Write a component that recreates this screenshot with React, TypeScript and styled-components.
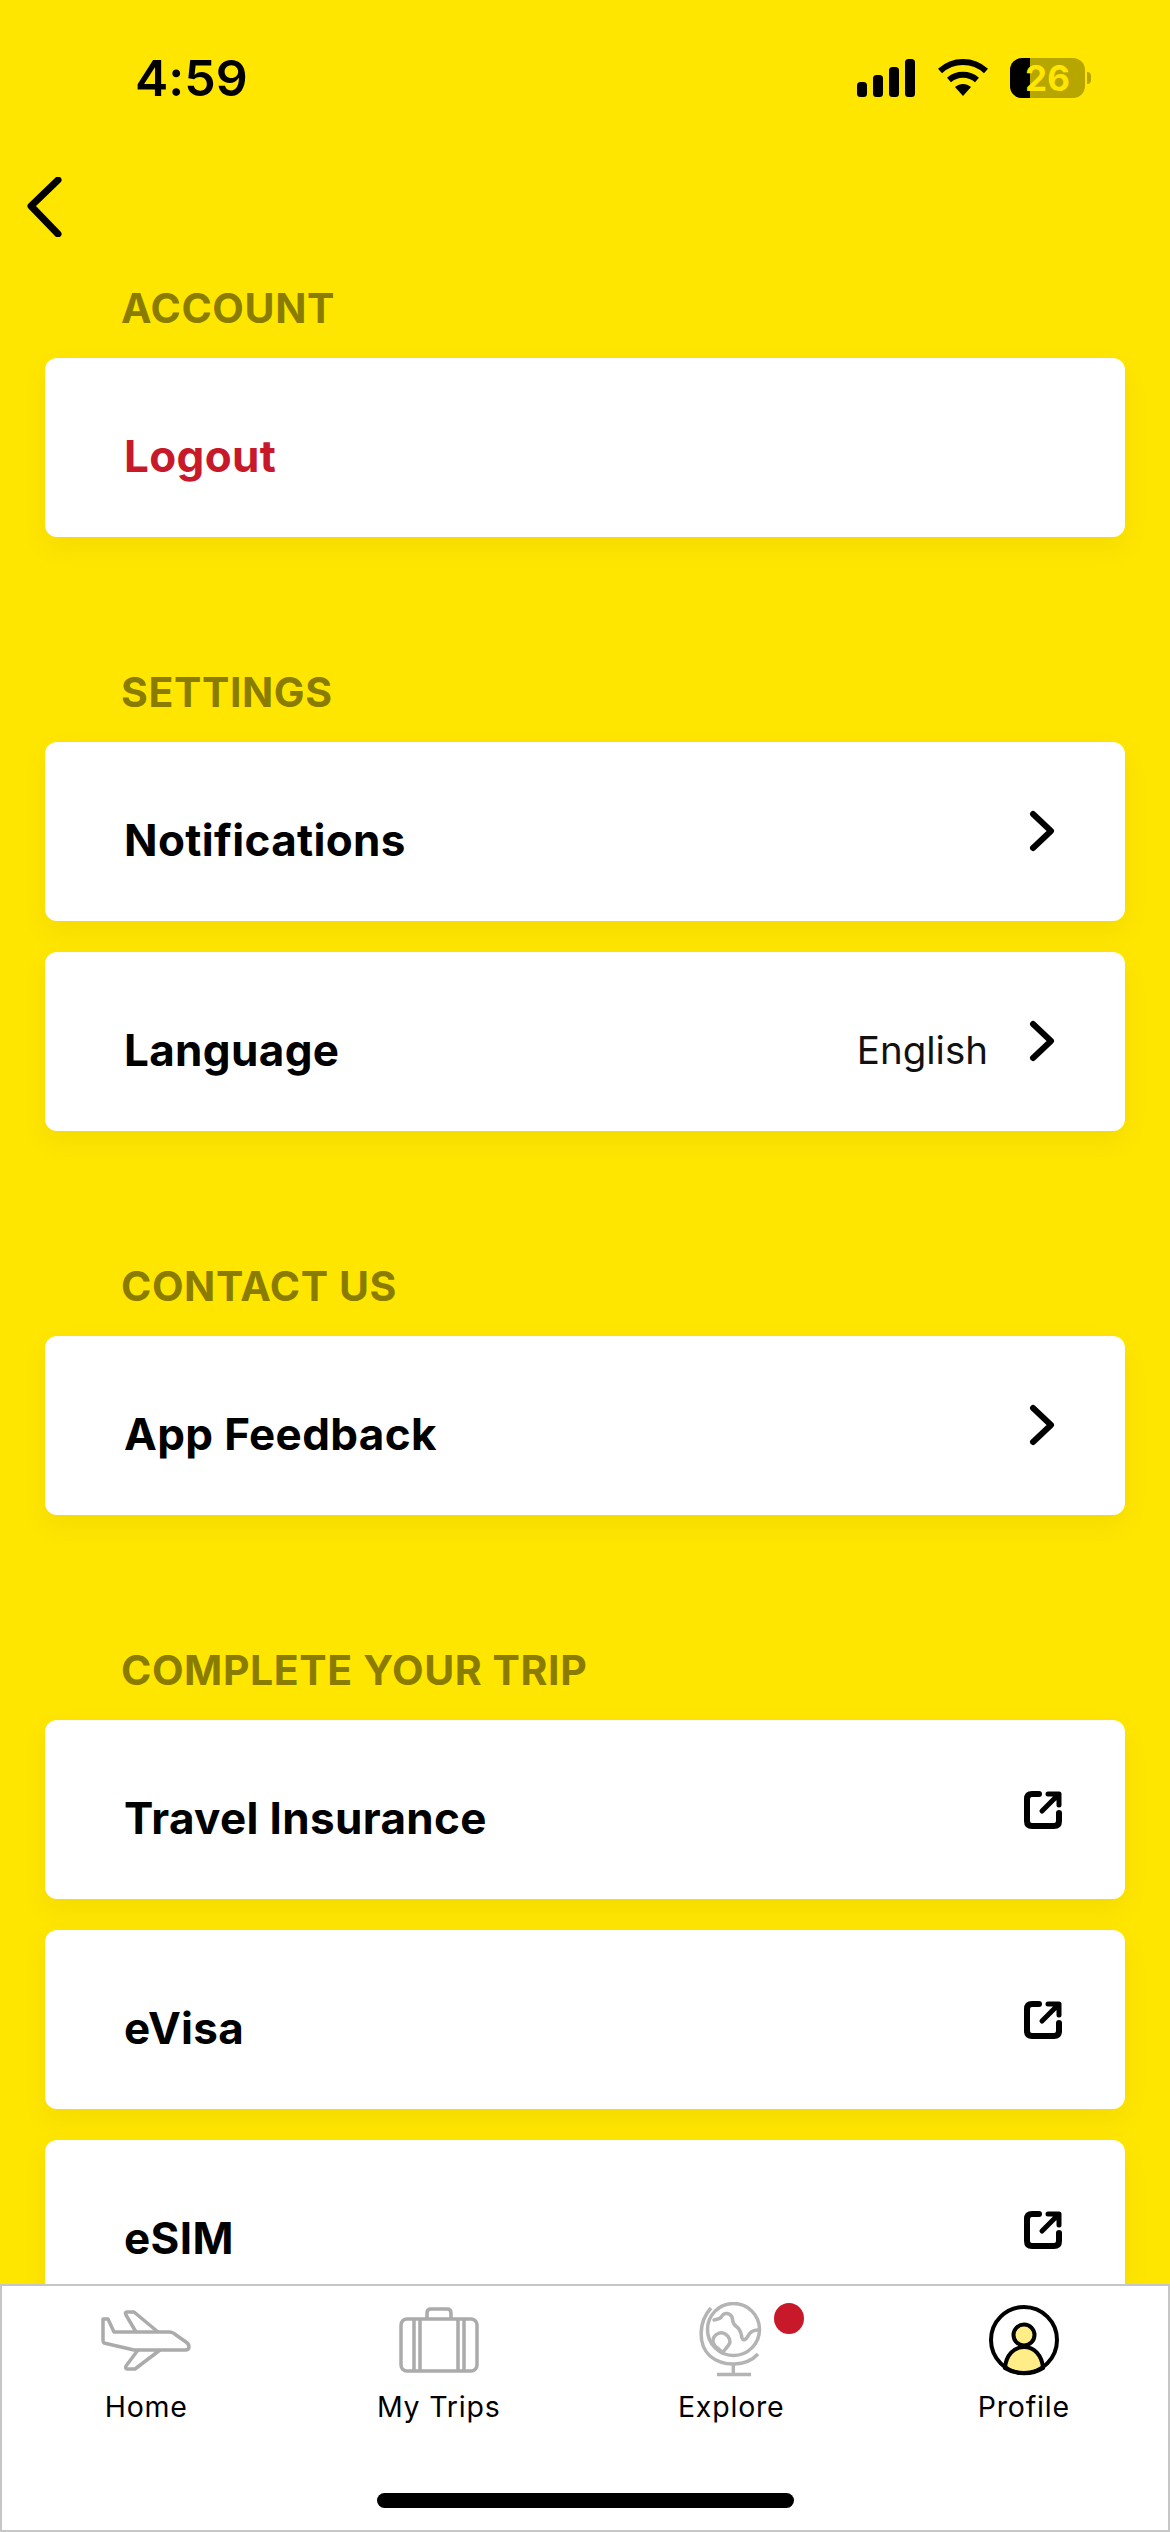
import React from "react";
import styled, { createGlobalStyle } from "styled-components";

const Global = createGlobalStyle`
  html, body { margin: 0; padding: 0; background: #FFE600; }
  body { font-family: Inter, "Liberation Sans", sans-serif; font-variant-ligatures: none; }
`;

const Screen = styled.div`
  position: relative;
  width: 1170px;
  height: 2532px;
  overflow: hidden;
  background: #ffe600;
`;

const StatusBar = styled.div`
  height: 156px;
  padding: 0 79px 0 135px;
  box-sizing: border-box;
  display: flex;
  align-items: center;
  justify-content: space-between;
`;

const Time = styled.span`
  font-size: 50px;
  font-weight: 600;
  color: #000;
`;

const StatusIcons = styled.div`
  display: flex;
  align-items: center;
  gap: 23px;
`;

const Battery = styled.div`
  position: relative;
  width: 75px;
  height: 40px;
  border-radius: 12px;
  overflow: hidden;
  background: #b8a600;
`;

const BatteryFill = styled.div`
  height: 100%;
  background: #000;
`;

const BatteryText = styled.span`
  position: absolute;
  inset: 0;
  display: flex;
  align-items: center;
  justify-content: center;
  font-size: 35px;
  font-weight: 700;
  color: #ffe600;
`;

const BatteryWrap = styled.div`
  display: flex;
  align-items: center;
  gap: 2px;
  margin-left: -1px;
`;

const BatteryCap = styled.div`
  width: 4px;
  height: 12px;
  border-radius: 0 6px 6px 0;
  background: #b8a600;
`;

const BackButton = styled.div`
  margin: 21px 0 46px 27px;
  width: 36px;
  height: 60px;
  display: flex;
`;

const Sections = styled.div`
  display: flex;
  flex-direction: column;
  gap: 130px;
  padding: 0 45px;
`;

const Section = styled.section`
  display: flex;
  flex-direction: column;
  gap: 31px;
`;

const SectionLabel = styled.h2`
  margin: 0 0 -6px 76px;
  height: 50px;
  line-height: 50px;
  font-size: 41px;
  font-weight: 700;
  letter-spacing: 0.6px;
  color: #8a7c00;
  text-transform: uppercase;
`;

const Card = styled.div`
  height: 179px;
  flex: none;
  box-sizing: border-box;
  padding: 0 62px 0 79px;
  display: flex;
  align-items: center;
  background: #fff;
  border-radius: 12px;
  box-shadow: 0 10px 24px rgba(120, 90, 0, 0.08);
`;

const CardTitle = styled.span<{ $danger?: boolean }>`
  flex: 1;
  padding-top: 16px;
  font-size: 44px;
  font-weight: 700;
  letter-spacing: 0.35px;
  color: ${(p) => (p.$danger ? "#c8192b" : "#000")};
`;

const CardValue = styled.span`
  padding-top: 16px;
  margin-right: 40px;
  font-size: 38.500px;
  font-weight: 400;
  color: #111;
`;

const ChevronIcon = styled.svg`
  flex: none;
  margin: -2px 7px 0 0;
`;

const TabBar = styled.nav`
  position: absolute;
  left: 0;
  right: 0;
  bottom: 0;
  height: 248px;
  box-sizing: border-box;
  background: #fff;
  box-shadow: inset 0 0 0 2px #c6c6c6;
  display: grid;
  grid-template-columns: repeat(4, 1fr);
  align-items: start;
  padding-top: 12px;
`;

const Tab = styled.div`
  display: flex;
  flex-direction: column;
  align-items: center;
`;

const TabIcon = styled.div`
  position: relative;
  height: 88px;
  display: flex;
  align-items: center;
  justify-content: center;
`;

const Dot = styled.span`
  position: absolute;
  left: 75px;
  top: 7px;
  width: 30px;
  height: 31px;
  border-radius: 50%;
  background: #c8192b;
`;

const TabLabel = styled.span`
  margin-top: 6px;
  font-size: 28.500px;
  line-height: 34px;
  font-weight: 400;
  letter-spacing: 0.8px;
  color: #000;
`;

const HomeIndicator = styled.div`
  position: absolute;
  left: 377px;
  bottom: 24px;
  width: 417px;
  height: 15px;
  border-radius: 8px;
  background: #000;
`;

const Chevron = () => (
  <ChevronIcon width="28" height="42" viewBox="0 0 28 42" fill="none" stroke="#000" strokeWidth="6" strokeLinecap="round" strokeLinejoin="round">
    <path d="M5 4 L23 21 L5 38" />
  </ChevronIcon>
);

const External = () => (
  <svg width="40" height="40" viewBox="0 0 40 40" fill="none" stroke="#000" strokeWidth="6" strokeLinecap="round" strokeLinejoin="round">
    <path d="M16 4 H9 Q4 4 4 9 V31 Q4 36 9 36 H31 Q36 36 36 31 V23" />
    <path d="M19 21 L35 5 M25 4 H36 V15" strokeWidth="5" />
  </svg>
);

const Signal = () => (
  <svg width="58" height="38" viewBox="0 0 58 38" fill="#000">
    <rect x="0" y="23" width="10" height="15" rx="3.5" />
    <rect x="16" y="16" width="10" height="22" rx="3.5" />
    <rect x="32" y="8" width="10" height="30" rx="3.5" />
    <rect x="48" y="0" width="10" height="38" rx="3.5" />
  </svg>
);

const Wifi = () => (
  <svg width="50" height="38" viewBox="0 0 50 38" fill="none" stroke="#000" strokeWidth="6">
    <path d="M2 12 C15 0 35 0 48 12" />
    <path d="M11 21 C19 14 31 14 39 21" />
    <path d="M17 28 L25 37 L33 28 C28 24 22 24 17 28 Z" fill="#000" stroke="none" />
  </svg>
);

const Plane = () => (
  <svg width="90" height="62" viewBox="0 0 90 62" fill="none" stroke="#ababab" strokeWidth="3.5" strokeLinejoin="round">
    <path d="M2 10 H7 L13 23 H68 Q72 23 75 26 L85 33 Q88 35 88 38 Q88 41 84 41 H33 L3 34 Q2 33.5 2 31 Z" />
    <path d="M35 23 L25 6 Q23.500 3 26 3 H33 L57 23" />
    <path d="M37 41 L25 57 Q23.500 60 27 60 H34 L59 41" />
  </svg>
);

const Suitcase = () => (
  <svg width="80" height="66" viewBox="0 0 80 66" fill="none" stroke="#ababab" strokeWidth="3.5" strokeLinejoin="round">
    <rect x="2" y="12" width="76" height="52" rx="6" />
    <path d="M28 12 V6 Q28 2 32 2 H48 Q52 2 52 6 V12" />
    <path d="M15 12 V64 M21 12 V64 M59 12 V64 M65 12 V64" />
  </svg>
);

const Globe = () => (
  <svg width="64" height="76" viewBox="0 0 64 76" fill="none" stroke="#b4b4b4" strokeWidth="3.500" strokeLinecap="round" strokeLinejoin="round">
    <circle cx="34.500" cy="27.500" r="26" />
    <path d="M12 6 C-1 20 -1 43 11 54 C24 65 47 65 59 52" strokeLinecap="butt" />
    <path d="M34.300 61 V72.500 M18 72.500 H52" strokeLinecap="butt" />
    <path d="M15 18 C17 17 21 18 23 14 C25 10 31 11 33 15 C34 19 33 22 38 25 C42 28 42 32 43 36 C44 39 47 38 49 34 C51 30 54 28 59 28" />
    <path d="M15 35 C17 32 21 30 24 31 C28 32 31 36 31 40 C30 44 27 46 23 51 C21 47 18 46 16 44 C14 41 13 38 15 35 Z" />
  </svg>
);

const Profile = () => (
  <svg width="72" height="72" viewBox="0 0 72 72" fill="none" stroke="#000" strokeWidth="4">
    <circle cx="36" cy="31" r="10.500" fill="#ffee88" />
    <path d="M17 64 C18 51 26 43 36 43 C46 43 54 51 55 64 C44 71 28 71 17 64 Z" fill="#ffee88" />
    <circle cx="36" cy="36" r="33" />
  </svg>
);

const groups: { label: string; items: { title: string; value?: string; kind: "none" | "chevron" | "external"; danger?: boolean }[] }[] = [
  { label: "Account", items: [{ title: "Logout", kind: "none", danger: true }] },
  {
    label: "Settings",
    items: [
      { title: "Notifications", kind: "chevron" },
      { title: "Language", value: "English", kind: "chevron" },
    ],
  },
  { label: "Contact us", items: [{ title: "App Feedback", kind: "chevron" }] },
  {
    label: "Complete your trip",
    items: [
      { title: "Travel Insurance", kind: "external" },
      { title: "eVisa", kind: "external" },
      { title: "eSIM", kind: "external" },
    ],
  },
];

export default function App() {
  return (
    <Screen>
      <Global />
      <StatusBar>
        <Time>4:59</Time>
        <StatusIcons>
          <Signal />
          <Wifi />
          <BatteryWrap>
            <Battery>
              <BatteryFill style={{ width: `${(20 / 75) * 100}%` }} />
              <BatteryText>26</BatteryText>
            </Battery>
            <BatteryCap />
          </BatteryWrap>
        </StatusIcons>
      </StatusBar>
      <BackButton>
        <svg width="36" height="60" viewBox="0 0 36 60" fill="none" stroke="#000" strokeWidth="7" strokeLinecap="round" strokeLinejoin="round">
          <path d="M31 3 L4 29 L31 57" />
        </svg>
      </BackButton>
      <Sections>
        {groups.map((g) => (
          <Section key={g.label}>
            <SectionLabel>{g.label}</SectionLabel>
            {g.items.map((it) => (
              <Card key={it.title}>
                <CardTitle $danger={it.danger}>{it.title}</CardTitle>
                {it.value && <CardValue>{it.value}</CardValue>}
                {it.kind === "chevron" && <Chevron />}
                {it.kind === "external" && <External />}
              </Card>
            ))}
          </Section>
        ))}
      </Sections>
      <TabBar>
        <Tab>
          <TabIcon><Plane /></TabIcon>
          <TabLabel>Home</TabLabel>
        </Tab>
        <Tab>
          <TabIcon><Suitcase /></TabIcon>
          <TabLabel>My Trips</TabLabel>
        </Tab>
        <Tab>
          <TabIcon>
            <Globe />
            <Dot />
          </TabIcon>
          <TabLabel>Explore</TabLabel>
        </Tab>
        <Tab>
          <TabIcon><Profile /></TabIcon>
          <TabLabel>Profile</TabLabel>
        </Tab>
        <HomeIndicator />
      </TabBar>
    </Screen>
  );
}
